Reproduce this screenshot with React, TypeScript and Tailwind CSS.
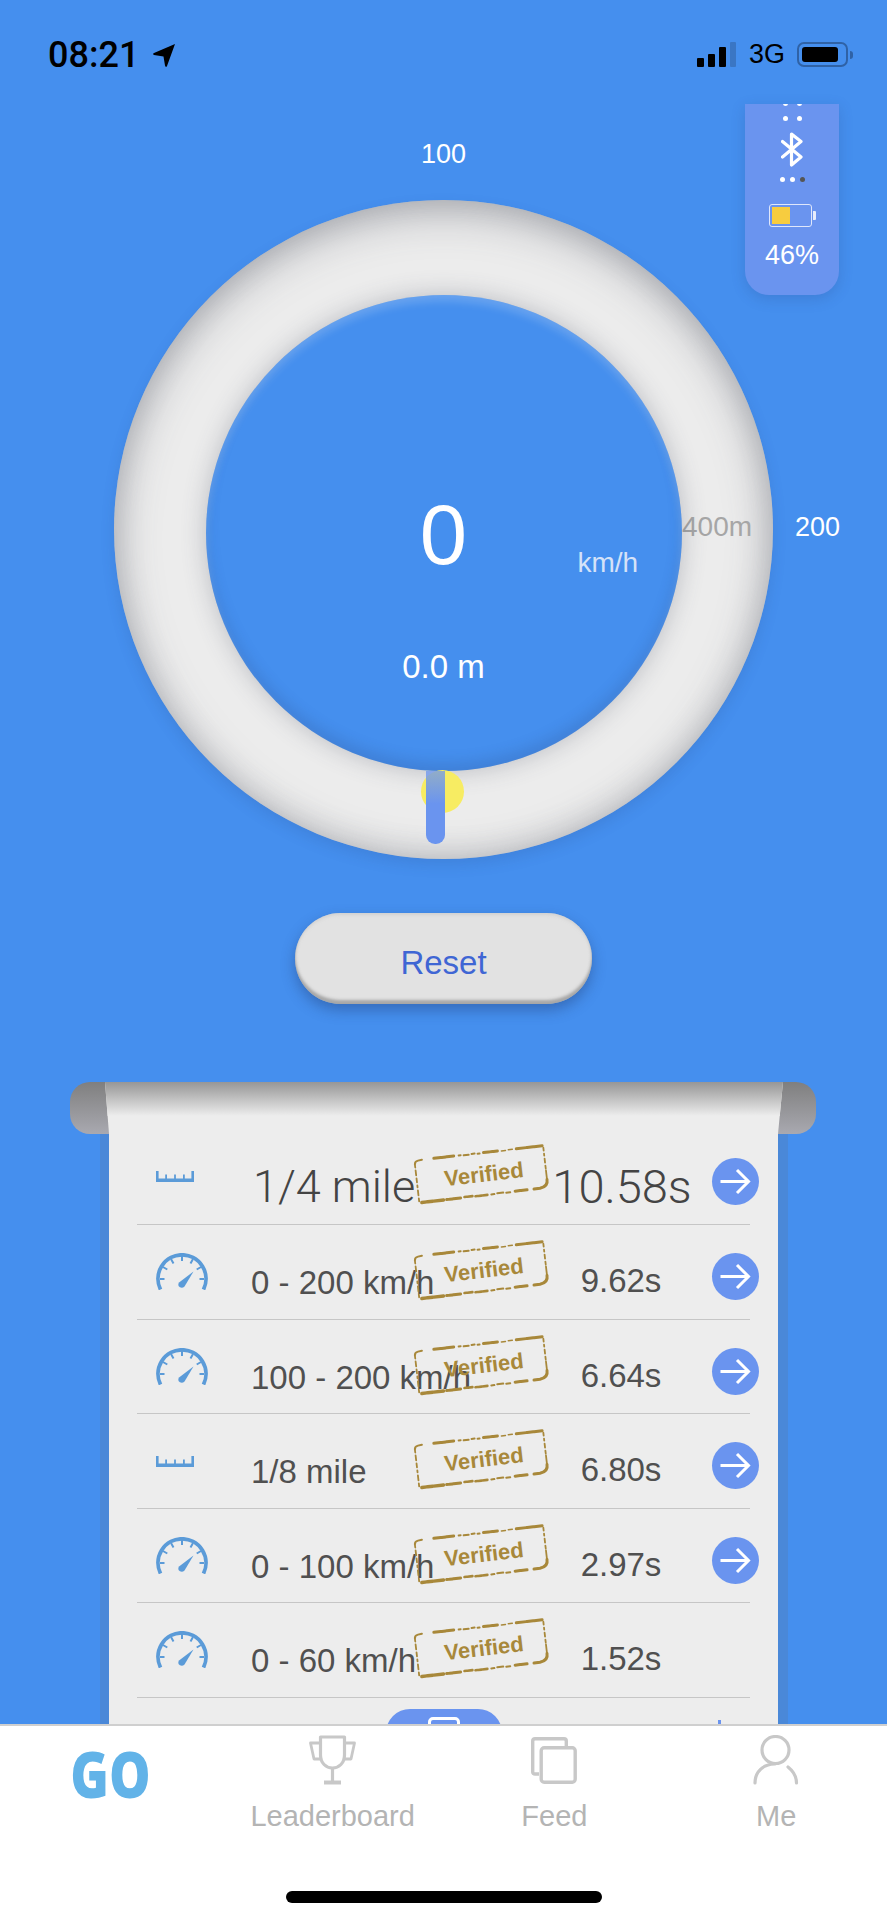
const sans = "font-['Liberation_Sans',Arial,sans-serif]";

function Stamp({ top }: { top: string }) {
  return (
    <div className={`absolute left-[279px] ${top} w-[130px] h-[43px] -rotate-[6.6deg] flex items-center justify-center`}>
      <svg className="absolute inset-0 overflow-visible" width="130" height="43" viewBox="0 0 130 43" fill="none" stroke="#a8883a" strokeLinecap="round">
        <path d="M0.5 4 Q0.5 1 4 0.5 L8 0" strokeWidth="2" />
        <path d="M20 0 H40" strokeWidth="3" strokeDasharray="7 1 4 1 7 3" />
        <path d="M45 0 H47 M50 0.5 H55 M58 0 H61 M64 0.5 H66" strokeWidth="2" />
        <path d="M70 0 H84" strokeWidth="3" strokeDasharray="5 1 3 1 5 2" />
        <path d="M88 0.5 H92 M95 0 H99" strokeWidth="1.6" />
        <path d="M103 0 H129" strokeWidth="3" strokeDasharray="10 1 6 1 9 2" />
        <path d="M130 2 V5 M130 8 V10 M130 13 V17 M130 20 V23 M130 25 V34" strokeWidth="1.8" />
        <path d="M130 34 Q130.5 41 122 42 H116" strokeWidth="3" />
        <path d="M109 42 H97" strokeWidth="3" strokeDasharray="6 1 5 2" />
        <path d="M92 42.5 H88 M85 42 H79 M76 42.5 H73" strokeWidth="2" />
        <path d="M69 42.5 H57 M54 42 H46" strokeWidth="2.6" strokeDasharray="5 1 3 1" />
        <path d="M42 42.5 H28" strokeWidth="3" strokeDasharray="7 1 3 1" />
        <path d="M25 42.5 H3" strokeWidth="3.4" strokeDasharray="10 1 5 1 6 1" />
        <path d="M0.5 41 V38 M0.5 35 V30 M0.5 27 V25 M0.5 22 V18 M0.5 15 V10 M0.5 7 V5" strokeWidth="1.8" />
      </svg>
      <span className={`${sans} pl-[6px] text-[22px] font-bold text-[#a8883a] leading-none`}>Verified</span>
    </div>
  );
}

function Ruler() {
  return (
    <svg width="38" height="11" viewBox="0 0 38 11" fill="#5b9bd8">
      <path d="M0 0 H2.6 V7.5 H35.4 V0 H38 V11 H0 Z" />
      <rect x="9.2" y="3.5" width="1.8" height="5" />
      <rect x="18.1" y="3.5" width="1.8" height="5" />
      <rect x="27" y="3.5" width="1.8" height="5" />
    </svg>
  );
}

function Gauge() {
  return (
    <svg width="52" height="37" viewBox="0 0 52 37" fill="none" stroke="#5b9bd8">
      <path d="M4.5 36.5 A24 24 0 1 1 47.5 36.5" strokeWidth="3.8" />
      <path d="M26 3 V8 M37 6 L34.5 10.5 M15 6 L17.5 10.5 M45 14 L40.7 16.5 M7 14 L11.3 16.5 M48 26 H43.5 M4 26 H8.5" strokeWidth="2" />
      <path d="M37.5 18.5 L28.5 33.5 C25.5 36.5 20.5 33.5 23 29.5 Z" fill="#5b9bd8" stroke="none" />
    </svg>
  );
}

function Arrow() {
  return (
    <div className="w-[47px] h-[47px] rounded-full bg-[#6a94ef] flex items-center justify-center">
      <svg width="31" height="27" viewBox="0 0 31 27" fill="none" stroke="#fff" strokeWidth="3">
        <path d="M0.5 13.5 H28.5 M17 2 L28.5 13.5 L17 25" />
      </svg>
    </div>
  );
}

type Row = { icon: "r" | "g"; label: string; time: string; arrow: boolean };
const rows: Row[] = [
  { icon: "g", label: "0 - 200 km/h", time: "9.62s", arrow: true },
  { icon: "g", label: "100 - 200 km/h", time: "6.64s", arrow: true },
  { icon: "r", label: "1/8 mile", time: "6.80s", arrow: true },
  { icon: "g", label: "0 - 100 km/h", time: "2.97s", arrow: true },
  { icon: "g", label: "0 - 60 km/h", time: "1.52s", arrow: false },
];

function Tab({ label, children }: { label: string; children: React.ReactNode }) {
  return (
    <div className="flex flex-col items-center">
      <div className="h-[50px] flex items-center justify-center">{children}</div>
      <span className={`mt-[14px] text-[29px] leading-[34px] text-[#b4b4b4] ${sans}`}>{label}</span>
    </div>
  );
}

export default function App() {
  return (
    <div className={`w-[887px] h-[1920px] bg-[#458fee] flex flex-col overflow-hidden ${sans}`}>
      <div className="flex-1 min-h-0 overflow-hidden relative">
        {/* status bar */}
        <div className="h-[104px] flex items-start justify-between pt-[36px] pl-[48px] pr-[34px]">
          <div className="flex items-center">
            <span className="font-['Roboto','Liberation_Sans',sans-serif] text-[36px] leading-[38px] font-medium text-black">08:21</span>
            <svg className="ml-[14px]" width="22" height="23" viewBox="0 0 22 23" fill="#000">
              <path d="M22 0 L14 22 Q12.8 24 12 21.5 L10.5 12.5 L1 11 Q-0.8 10.2 1 9 Z" />
            </svg>
          </div>
          <div className="flex items-center pt-[5px]">
            <div className="flex items-end gap-[4px] h-[25px]">
              <div className="w-[7px] h-[9px] bg-black rounded-[1px]" />
              <div className="w-[7px] h-[13px] bg-black rounded-[1px]" />
              <div className="w-[7px] h-[20px] bg-black rounded-[1px]" />
              <div className="w-[6px] h-[25px] bg-[#3a76c4] rounded-[1px]" />
            </div>
            <span className="ml-[13px] text-[27px] leading-[27px] text-black">3G</span>
            <div className="ml-[12px] w-[51px] h-[25px] rounded-[7px] border-2 border-[#2f62a6] p-[3px]">
              <div className="w-[36px] h-full bg-black rounded-[3px]" />
            </div>
            <div className="w-[3px] h-[8px] bg-[#2f62a6] rounded-r-[3px] ml-[2px]" />
          </div>
        </div>

        {/* device panel */}
        <div className="absolute top-[104px] left-[745px] w-[94px] h-[191px] bg-[#6a94ef] rounded-b-[24px] shadow-[0_4px_14px_rgba(40,70,130,0.22)] overflow-hidden flex flex-col items-center">
          <div className="flex gap-[9px] -mt-[3px]">
            <div className="w-[5px] h-[5px] rounded-full bg-white" />
            <div className="w-[5px] h-[5px] rounded-full bg-white" />
          </div>
          <div className="flex gap-[9px] mt-[10px]">
            <div className="w-[5px] h-[5px] rounded-full bg-white" />
            <div className="w-[5px] h-[5px] rounded-full bg-white" />
          </div>
          <svg className="mt-[11px]" width="22" height="35" viewBox="0 0 22 35" fill="none" stroke="#fff" strokeWidth="3.2" strokeLinejoin="round" strokeLinecap="round">
            <path d="M1.5 9.5 L20 25 L10.5 33 V2 L20 9.5 L1.5 25" />
          </svg>
          <div className="flex gap-[5px] mt-[10px]">
            <div className="w-[5px] h-[5px] rounded-full bg-white" />
            <div className="w-[5px] h-[5px] rounded-full bg-white" />
            <div className="w-[5px] h-[5px] rounded-full bg-[#555]" />
          </div>
          <div className="flex items-center mt-[22px]">
            <div className="w-[43px] h-[23px] border border-[#dfe7fb] rounded-[3px] p-[2px]">
              <div className="w-[18px] h-full bg-[#f7cc3f]" />
            </div>
            <div className="w-[3px] h-[9px] bg-[#e6ecfb] ml-[1px] rounded-r-[1px]" />
          </div>
          <span className="mt-[12px] text-[27px] leading-[32px] text-white">46%</span>
        </div>

        {/* gauge */}
        <div className="pt-[96px]">
          <div className="relative mx-auto w-[659px] h-[659px] rounded-full bg-[#ececec] shadow-[inset_0_10px_44px_rgba(70,75,90,0.4),inset_0_-4px_30px_rgba(70,75,90,0.16),0_6px_14px_rgba(40,70,130,0.16)] flex items-center justify-center pt-[7px]">
            <span className="absolute -top-[62px] left-0 right-0 text-center text-[27px] leading-[32px] text-white">100</span>
            <span className="absolute top-[311px] left-[681px] text-[27px] leading-[32px] text-white">200</span>
            <span className="absolute top-[311px] left-[568px] text-[28px] leading-[32px] text-[#a6a6a6]">400m</span>
            <div className="relative w-[476px] h-[476px] rounded-full bg-[#458fee] shadow-[0_0_24px_rgba(70,75,95,0.3),inset_0_6px_9px_rgba(255,255,255,0.2),inset_0_-8px_14px_rgba(40,60,110,0.18)] flex flex-col items-center pt-[197px]">
              <span className="text-[85px] leading-[85px] text-white">0</span>
              <span className="mt-[70px] text-[33px] leading-[40px] text-white">0.0 m</span>
              <span className="absolute top-[252px] left-[372px] text-[28px] leading-[32px] text-[#d5e2f8]">km/h</span>
            </div>
            <div className="absolute top-[570px] left-[307px] w-[43px] h-[43px] rounded-full bg-[#f7ec62]" />
            <div className="absolute top-[571px] left-[312px] w-[19px] h-[73px] rounded-b-[9px] bg-[linear-gradient(to_bottom,rgba(106,148,239,0.72),#6a94ef_45%)]" />
          </div>
        </div>

        {/* reset */}
        <div className="mt-[54px] flex justify-center">
          <div className="w-[297px] h-[91px] rounded-[46px] bg-[#e2e2e2] shadow-[inset_0_-4px_3px_rgba(110,110,110,0.5),inset_0_2px_3px_rgba(200,200,200,0.6),0_6px_14px_rgba(30,50,100,0.38)] flex items-center justify-center pt-[9px] text-[33px] text-[#3f66d4]">
            Reset
          </div>
        </div>

        {/* score sheet */}
        <div className="relative mt-[78px] ml-[70px] w-[746px] h-[700px]">
          <div className="absolute top-0 left-0 right-0 h-[52px] rounded-[20px] bg-[linear-gradient(to_bottom,#7f7f7f,#a9a9b0)]" />
          <div className="absolute top-[52px] left-[30px] w-[688px] bottom-0 bg-[#4a88d8]" />
          <div className="relative ml-[35px] w-[678px] h-full bg-[#ededed] pt-[48px] pl-[32px] [clip-path:polygon(0_0,678px_0,673px_52px,673px_100%,4px_100%,4px_52px)]">
            <div className="absolute top-0 left-0 right-0 h-[34px] bg-[linear-gradient(to_bottom,#969696,#ededed)]" />

            <div className="relative w-[613px] h-[95px] border-b border-[#c6c6c6] grid grid-cols-[114px_289px_162px_47px] items-start">
              <div className="mt-[41px] ml-[19px]"><Ruler /></div>
              <span className="mt-[30px] ml-[2px] text-[45px] leading-[54px] text-[#444] whitespace-nowrap font-['Roboto','Liberation_Sans',sans-serif] font-light">1/4 mile</span>
              <span className="mt-[30px] ml-[2px] text-center text-[47px] leading-[54px] text-[#444] font-['Roboto','Liberation_Sans',sans-serif] font-light">10.58s</span>
              <div className="mt-[28px] ml-[10px]"><Arrow /></div>
              <Stamp top="top-[23px]" />
            </div>

            {rows.map((r) => (
              <div key={r.label} className="relative w-[613px] h-[94.5px] border-b border-[#c6c6c6] grid grid-cols-[114px_289px_162px_47px] items-start">
                <div className={r.icon === "g" ? "mt-[28px] ml-[19px]" : "mt-[42px] ml-[19px]"}>
                  {r.icon === "g" ? <Gauge /> : <Ruler />}
                </div>
                <span className="mt-[39px] text-[33px] leading-[38px] text-[#505050] whitespace-nowrap">{r.label}</span>
                <span className="mt-[37px] text-center text-[33px] leading-[38px] text-[#505050]">{r.time}</span>
                <div className="mt-[28px] ml-[10px]">{r.arrow ? <Arrow /> : null}</div>
                <Stamp top="top-[24px]" />
              </div>
            ))}

            <div className="mt-[11px] flex items-start">
              <div className="ml-[249px] w-[116px] h-[40px] rounded-t-[24px] bg-[#6a94ef] flex justify-center pt-[8px]">
                <div className="w-[32px] h-[30px] border-[3px] border-white rounded-[5px]" />
              </div>
              <div className="ml-[216px] mt-[11px] w-[3px] h-[10px] bg-[#6a94ef]" />
            </div>
          </div>
        </div>
      </div>

      {/* tab bar */}
      <div className="relative h-[196px] shrink-0 bg-white border-t-2 border-[#cfcfcf] grid grid-cols-4 items-start pt-[9px]">
        <div className="flex justify-center pt-[3px]">
          <span className="font-['Open_Sans',sans-serif] font-extrabold text-[63px] leading-[72px] text-[#62b3e8] scale-x-[0.83]">GO</span>
        </div>
        <Tab label="Leaderboard">
          <svg width="47" height="50" viewBox="0 0 47 50" fill="none" stroke="#c8c8c8" strokeWidth="3.2" strokeLinejoin="round">
            <path d="M11.5 2 H35.5 V20 C35.5 28 30 33 23.5 33 C17 33 11.5 28 11.5 20 Z" />
            <path d="M11 8 H1.5 L5 24 H12 M36 8 H45.5 L42 24 H35" strokeWidth="2.8" />
            <path d="M23.5 33 V46" />
            <path d="M15 47.5 H32" strokeWidth="4" />
          </svg>
        </Tab>
        <Tab label="Feed">
          <svg width="46" height="47" viewBox="0 0 46 47" fill="none" stroke="#c8c8c8" strokeWidth="3.4">
            <path d="M8 37 H4 C2.5 37 1.7 36.3 1.7 35 V4 C1.7 2.5 2.5 1.7 4 1.7 H33 C34.5 1.7 35.3 2.5 35.3 4 V9" />
            <rect x="10.2" y="10.7" width="34" height="34.6" rx="3" />
          </svg>
        </Tab>
        <Tab label="Me">
          <svg width="46" height="50" viewBox="0 0 46 50" fill="none" stroke="#c8c8c8" strokeWidth="3.2" strokeLinecap="round">
            <circle cx="22.5" cy="15" r="13.5" />
            <path d="M22 29 C10 29 2 37 2 48 M35 32 C40 36 43.5 41 43.5 48" />
          </svg>
        </Tab>
        <div className="absolute left-[286px] top-[165px] w-[316px] h-[12px] rounded-full bg-black" />
      </div>
    </div>
  );
}
